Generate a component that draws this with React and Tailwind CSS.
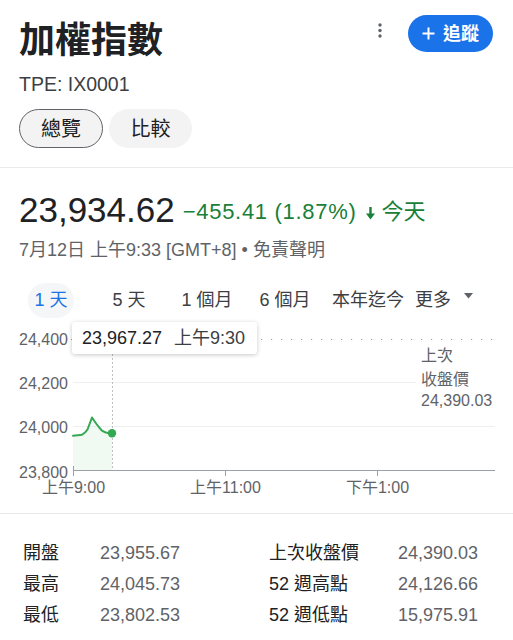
import React from "react";

function Kebab() {
  return (
    <svg width="6" height="16" viewBox="0 0 6 16" className="block">
      <circle cx="3" cy="2" r="1.7" fill="#5f6368" />
      <circle cx="3" cy="7.5" r="1.7" fill="#5f6368" />
      <circle cx="3" cy="13" r="1.7" fill="#5f6368" />
    </svg>
  );
}

function Chart() {
  const line =
    "M73,437.7 C76,437.5 79,437.2 82,436.7 C84,435.5 86,434 87.5,431.5 L92,419.5 L97,426.7 C99,429 100.5,431.5 102,432.7 C104,434 106,434.8 108,435 L112,435.3";
  const fill = line + " L112,472 L73,472 Z";
  return (
    <div className="relative h-[180px] w-full">
      <svg width="513" height="180" viewBox="0 320 513 180" className="block">
        <g fontFamily="'Liberation Sans','Noto Sans CJK TC',sans-serif">
          <line x1="73" x2="495" y1="384.5" y2="384.5" stroke="#eeeff1" strokeWidth="1" />
          <line x1="73" x2="495" y1="428.5" y2="428.5" stroke="#eeeff1" strokeWidth="1" />
          <line x1="71" x2="496" y1="341.5" y2="341.5" stroke="#9aa0a6" strokeWidth="1.2" strokeDasharray="1.2 8.8" />
          <rect x="416" y="345" width="82" height="70" fill="#ffffff" />
          <text x="421" y="363" fontSize="16" fill="#5f6368">上次</text>
          <text x="421" y="387" fontSize="16" fill="#5f6368">收盤價</text>
          <text x="421" y="407.5" fontSize="16" fill="#5f6368">24,390.03</text>
          <path d={fill} fill="#34a853" fillOpacity="0.07" />
          <path d={line} fill="none" stroke="#34a853" strokeWidth="2" strokeLinejoin="round" strokeLinecap="round" />
          <line x1="112.5" x2="112.5" y1="356" y2="472" stroke="#bdc1c6" strokeWidth="1" strokeDasharray="2 2" />
          <circle cx="112" cy="435.3" r="4.2" fill="#34a853" />
          <line x1="73" x2="495" y1="472.5" y2="472.5" stroke="#9aa0a6" strokeWidth="1" />
          <line x1="73.5" x2="73.5" y1="468" y2="478" stroke="#9aa0a6" strokeWidth="1" />
          <line x1="225.5" x2="225.5" y1="472" y2="478" stroke="#9aa0a6" strokeWidth="1" />
          <line x1="377.5" x2="377.5" y1="472" y2="478" stroke="#9aa0a6" strokeWidth="1" />
          <text x="68" y="347" fontSize="16" fill="#5f6368" textAnchor="end">24,400</text>
          <text x="68" y="390.5" fontSize="16" fill="#5f6368" textAnchor="end">24,200</text>
          <text x="68" y="435" fontSize="16" fill="#5f6368" textAnchor="end">24,000</text>
          <text x="68" y="479.5" fontSize="16" fill="#5f6368" textAnchor="end">23,800</text>
          <text x="73.5" y="495" fontSize="16" fill="#5f6368" textAnchor="middle">上午9:00</text>
          <text x="225.5" y="495" fontSize="16" fill="#5f6368" textAnchor="middle">上午11:00</text>
          <text x="377.5" y="495" fontSize="16" fill="#5f6368" textAnchor="middle">下午1:00</text>
        </g>
      </svg>
      <div className="absolute left-[72px] top-[4px] flex h-[32px] w-[185px] items-center gap-[12px] rounded-[3px] bg-white pl-[10px] text-[18px] leading-none shadow-[0_1px_4px_rgba(0,0,0,0.22)]">
        <span className="text-[#202124]">23,967.27</span>
        <span className="text-[#3c4043]">上午9:30</span>
      </div>
    </div>
  );
}

export default function App() {
  const tabs = ["5 天", "1 個月", "6 個月"];
  const stats = [
    ["開盤", "23,955.67", "上次收盤價", "24,390.03"],
    ["最高", "24,045.73", "52 週高點", "24,126.66"],
    ["最低", "23,802.53", "52 週低點", "15,975.91"],
  ];
  return (
    <div className="w-[513px] h-[640px] overflow-hidden bg-white font-[family-name:'Liberation_Sans','Noto_Sans_CJK_TC',sans-serif] text-[#202124]">
      <div className="px-[19px] pt-[15px]">
        <div className="flex items-start justify-between">
          <h1 className="font-[family-name:'Noto_Sans_CJK_TC',sans-serif] text-[36px] font-bold leading-[44px] text-[#202124]">
            加權指數
          </h1>
          <div className="flex items-start pr-px">
            <div className="mt-[8px] mr-[25px]">
              <Kebab />
            </div>
            <button className="flex h-[37px] w-[85px] items-center rounded-full bg-[#1a73e8] pl-[14px] text-white">
              <svg width="13" height="13" viewBox="0 0 13 13" className="block">
                <path d="M6.5 0.5v12M0.5 6.5h12" stroke="#fff" strokeWidth="2" />
              </svg>
              <span className="ml-[8px] text-[18px] font-semibold leading-none">追蹤</span>
            </button>
          </div>
        </div>
        <div className="mt-[13px] text-[19.5px] leading-[24px] text-[#3c4043]">TPE: IX0001</div>
        <div className="mt-[13px] flex gap-[6px]">
          <div className="flex h-[39px] w-[84px] items-center justify-center rounded-full border border-[#5f6368] bg-[#f3f3f3] text-[20px] leading-none">
            總覽
          </div>
          <div className="flex h-[39px] w-[83px] items-center justify-center rounded-full bg-[#f3f3f3] text-[20px] leading-none">
            比較
          </div>
        </div>
      </div>
      <div className="mt-[19px] h-px bg-[#e8eaed]" />

      <div className="px-[19px] pt-[22px]">
        <div className="flex items-center">
          <span className="text-[35px] leading-[40px] text-[#202124]">23,934.62</span>
          <span className="ml-[8px] mt-[4px] text-[22px] leading-[28px] tracking-[0.7px] text-[#188038]">
            −455.41 (1.87%)
          </span>
          <svg width="9" height="13" viewBox="0 0 9 13" className="ml-[9px] mt-[6px] block">
            <path d="M3.3 0h2.4v7.5H3.3z M0 6.5h9L4.5 12.5z" fill="#188038" />
          </svg>
          <span className="ml-[7px] mt-[4px] text-[22px] leading-[28px] text-[#188038]">今天</span>
        </div>
        <div className="mt-[8px] text-[18px] leading-[24px] text-[#5f6368]">
          7月12日 上午9:33 [GMT+8] • 免責聲明
        </div>
      </div>

      <div className="mt-[20px] flex h-[36px] items-center pl-[12px] text-[18px] leading-none text-[#3c4043]">
        <div className="flex w-[78px] justify-center">
          <span className="flex h-[35px] w-[46px] items-center justify-center rounded-full bg-[#f5f6f7] text-[#1a73e8]">
            1 天
          </span>
        </div>
        {tabs.map((t) => (
          <div key={t} className="flex w-[78px] justify-center">
            {t}
          </div>
        ))}
        <div className="pl-[8px]">本年迄今</div>
        <div className="ml-[11px] flex items-center">
          更多
          <svg width="9" height="6" viewBox="0 0 9 6" className="ml-[13px] mb-[8px] block">
            <path d="M0 0h9L4.5 5.5z" fill="#5f6368" />
          </svg>
        </div>
      </div>

      <Chart />

      <div className="mt-[15px] h-px bg-[#e8eaed]" />

      <div className="grid grid-cols-[77px_169px_129px_auto] pl-[23px] pt-[24px] text-[18px] leading-[31px]">
        {stats.map((r) => (
          <React.Fragment key={r[0]}>
            <div className="text-[#202124]">{r[0]}</div>
            <div className="text-[#5f6368]">{r[1]}</div>
            <div className="text-[#202124]">{r[2]}</div>
            <div className="text-[#5f6368]">{r[3]}</div>
          </React.Fragment>
        ))}
      </div>
    </div>
  );
}
